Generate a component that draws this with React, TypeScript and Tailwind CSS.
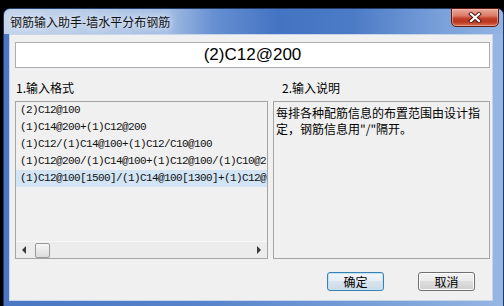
import React from "react";

const items = [
  "(2)C12@100",
  "(1)C14@200+(1)C12@200",
  "(1)C12/(1)C14@100+(1)C12/C10@100",
  "(1)C12@200/(1)C14@100+(1)C12@100/(1)C10@2",
  "(1)C12@100[1500]/(1)C14@100[1300]+(1)C12@",
];

function CloseButton() {
  return (
    <div className="w-[48px] h-[19px] -mt-[1px] rounded-b-[5px] border border-[#5b1e16] bg-[linear-gradient(180deg,#e9a99b_0%,#dc7a66_40%,#c2412a_55%,#b9361f_75%,#d9714f_100%)] flex items-center justify-center shadow-[inset_0_0_0_1px_rgba(255,200,190,0.5)]">
      <svg width="14" height="11" viewBox="0 0 14 11">
        <path d="M3 2 L11 9 M11 2 L3 9" stroke="#4a1410" strokeWidth="4" strokeLinecap="square" />
        <path d="M3 2 L11 9 M11 2 L3 9" stroke="#ffffff" strokeWidth="2.2" strokeLinecap="square" />
      </svg>
    </div>
  );
}

function HScrollbar() {
  return (
    <div className="h-[17px] flex items-center bg-[#ececec] border-t border-[#f8f8f8]">
      <div className="w-[17px] h-[17px] flex items-center justify-center">
        <svg width="5" height="8" viewBox="0 0 5 8">
          <path d="M4 0 L0 4 L4 8 Z" fill="#3a3a3a" />
        </svg>
      </div>
      <div className="ml-[2px] w-[15px] h-[15px] rounded-[2px] border border-[#9a9a9a] bg-[linear-gradient(180deg,#f6f6f6,#dcdcdc)]" />
      <div className="flex-1" />
      <div className="w-[17px] h-[17px] flex items-center justify-center">
        <svg width="5" height="8" viewBox="0 0 5 8">
          <path d="M1 0 L5 4 L1 8 Z" fill="#3a3a3a" />
        </svg>
      </div>
    </div>
  );
}

export default function App() {
  const cjk = "font-['Noto_Sans_CJK_SC',sans-serif]";
  return (
    <div className="w-[504px] h-[306px] bg-black overflow-hidden">
      <div className="ml-[3px] mt-[8px] w-[501px] h-[310px] rounded-t-[7px] border border-[#1f3a66] bg-[linear-gradient(90deg,#4a77c3_0%,#5683cb_40%,#7ea4da_80%,#97b6e3_100%)] flex flex-col">
        <div className="h-[25px] flex items-start justify-between pr-[4px] rounded-t-[6px] bg-[linear-gradient(90deg,#c3d3ea_0%,#b4c9e7_20%,#a2bce3_33%,#6790d2_42%,#4373c2_55%,#4c7bc6_70%,#7aa1da_88%,#93b3e2_100%)]">
          <span
            className={`${cjk} ml-[6px] mt-[6px] text-[12px] leading-[14px] text-[#111] [text-shadow:0_0_6px_#e8f0fb,0_0_10px_#e8f0fb]`}
          >
            钢筋输入助手-墙水平分布钢筋
          </span>
          <CloseButton />
        </div>
        <div className="ml-[5px] w-[484px] h-[267px] border border-[#c8d6ea] bg-[#f0f0f0] flex flex-col pl-[5px]">
          <div className="mt-[7px] w-[475px] h-[26px] border border-[#abadb3] bg-white flex items-center justify-center">
            <span className="font-['Liberation_Sans',sans-serif] text-[17px] leading-[20px] text-black">(2)C12@200</span>
          </div>
          <div className={`${cjk} mt-[13px] h-[14px] flex text-[12px] leading-[14px] text-black`}>
            <span className="ml-[1px] w-[266px]">1.输入格式</span>
            <span>2.输入说明</span>
          </div>
          <div className="mt-[6px] flex gap-[5px]">
            <div className="w-[253px] h-[158px] border border-[#a5a5a5] bg-[#f0f0f0] flex flex-col">
              <div className="flex-1 overflow-hidden">
                {items.map((it, i) => (
                  <div
                    key={i}
                    className={`h-[17px] pl-[4px] whitespace-nowrap font-['Liberation_Mono',monospace] text-[11px] tracking-[-0.6px] leading-[17px] text-[#111] ${
                      i === items.length - 1 ? "bg-[#d3e5f5]" : ""
                    }`}
                  >
                    {it}
                  </div>
                ))}
              </div>
              <HScrollbar />
            </div>
            <div
              className={`${cjk} w-[217px] h-[158px] border border-[#a5a5a5] bg-[#f0f0f0] px-[2px] pt-[3px] text-[12px] leading-[16px] text-black`}
            >
              <div>每排各种配筋信息的布置范围由设计指</div>
              <div>定，钢筋信息用"/"隔开。</div>
            </div>
          </div>
          <div className={`${cjk} mt-[13px] flex text-[12px] text-black`}>
            <button className="ml-[312px] w-[57px] h-[19px] rounded-[3px] border border-[#3c7fb1] bg-[linear-gradient(180deg,#f2f6f9_0%,#e6eef4_45%,#d8e4ee_50%,#cddbe7_100%)] shadow-[inset_0_0_0_1px_#bfe3f8] leading-[17px]">
              确定
            </button>
            <button className="ml-[34px] w-[57px] h-[19px] rounded-[3px] border border-[#707070] bg-[linear-gradient(180deg,#f2f2f2_0%,#ebebeb_45%,#dddddd_50%,#cfcfcf_100%)] shadow-[inset_0_0_0_1px_#fcfcfc] leading-[17px]">
              取消
            </button>
          </div>
        </div>
      </div>
    </div>
  );
}
